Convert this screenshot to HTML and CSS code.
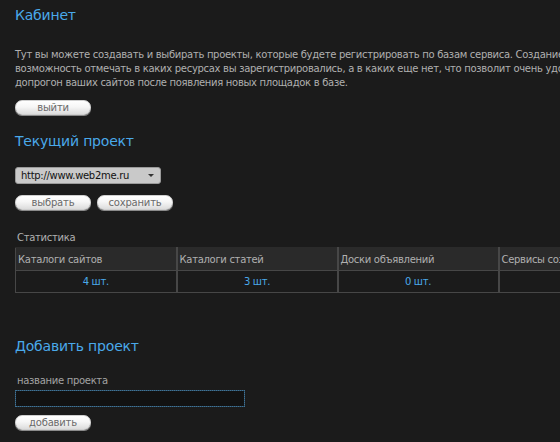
FILE: index.html
```html
<!DOCTYPE html>
<html lang="ru">
<head>
<meta charset="utf-8">
<link rel="stylesheet" href="styles.css">
</head>
<body>
<div class="page">
  <h2 class="title t-cab">Кабинет</h2>
  <p class="intro">Тут вы можете создавать и выбирать проекты, которые будете регистрировать по базам сервиса. Создание<br>возможность отмечать в каких ресурсах вы зарегистрировались, а в каких еще нет, что позволит очень удобно<br>допрогон ваших сайтов после появления новых площадок в базе.</p>
  <div class="row"><button class="btn">выйти</button></div>

  <h2 class="title t-cur">Текущий проект</h2>
  <div class="select"><span>http://www.web2me.ru</span><span class="arrow"></span></div>
  <div class="row gap"><button class="btn">выбрать</button><button class="btn">сохранить</button></div>

  <div class="stat-label">Статистика</div>
  <table class="stats">
    <tr class="head"><td>Каталоги сайтов</td><td>Каталоги статей</td><td>Доски объявлений</td><td>Сервисы создания</td></tr>
    <tr class="vals"><td>4 шт.</td><td>3 шт.</td><td>0 шт.</td><td></td></tr>
  </table>

  <h2 class="title t-add">Добавить проект</h2>
  <div class="field-label">название проекта</div>
  <div class="input"></div>
  <div class="row"><button class="btn">добавить</button></div>
</div>
</body>
</html>
```
FILE: styles.css
```css
html, body {
  margin: 0;
  padding: 0;
  background: #1b1b1b;
  overflow: hidden;
  width: 560px;
  height: 442px;
}
.page {
  padding: 0 0 0 15px;
  font-family: "DejaVu Sans", Verdana, sans-serif;
  font-size: 10px;
  letter-spacing: -0.3px;
  color: #b0b0b0;
  white-space: nowrap;
}
.title {
  margin: 0;
  font-size: 14px;
  letter-spacing: -0.2px;
  font-weight: normal;
  color: #4aa9ea;
  line-height: 20px;
}
.t-cab { padding-top: 5px; }
.t-cur { margin-top: 16px; }
.t-add { margin-top: 43px; }
.intro {
  margin: 23px 0 0 0;
  line-height: 14px;
}
.row {
  display: flex;
  margin-top: 10px;
}
.gap { gap: 6px; margin-top: 11px; }
.btn {
  width: 76px;
  height: 15px;
  padding: 0;
  border: 1px solid #cfcfcf;
  border-radius: 7px;
  background: linear-gradient(#ffffff 0%, #f6f6f6 45%, #dcdcdc 100%);
  box-shadow: 0 1px 0 #8a8a8a;
  font-family: "DejaVu Sans", Verdana, sans-serif;
  font-size: 10px;
  letter-spacing: -0.2px;
  line-height: 13px;
  color: #6a6a6a;
  text-align: center;
}
.select {
  margin-top: 16px;
  width: 146px;
  height: 17px;
  box-sizing: border-box;
  background: #c9c9c9;
  border: 1px solid #9a9a9a;
  border-radius: 3px;
  display: flex;
  align-items: center;
  justify-content: space-between;
  padding: 0 6px 0 5px;
  color: #111;
  font-size: 10px;
}
.arrow {
  width: 0;
  height: 0;
  border-left: 3px solid transparent;
  border-right: 3px solid transparent;
  border-top: 3px solid #333;
}
.stat-label {
  margin-top: 21px;
  padding-left: 2px;
  line-height: 14px;
}
.stats {
  margin-top: 2px;
  border-collapse: collapse;
  width: 645px;
  table-layout: fixed;
}
.stats td {
  border: 1px solid #474747;
  border-top: 0;
  padding: 0 2px;
}
.stats .head td {
  background: #2a2a2a;
  height: 22px;
  border-top: 1px solid #2a2a2a;
  border-left: 2px solid #474747;
}
.stats .vals td {
  height: 21px;
  text-align: center;
  color: #4aa9ea;
  border-left: 2px solid #474747;
}
.stats tr td:first-child { border-left: 1px solid #474747; }
.field-label {
  margin-top: 18px;
  padding-left: 2px;
  line-height: 14px;
  color: #a3a3a3;
}
.input {
  margin-top: 2px;
  width: 230px;
  height: 17px;
  box-sizing: border-box;
  border: 1px solid #2d4d63;
  outline: 1px dotted #3f7397;
  outline-offset: -1px;
  background: #121212;
}
.input + .row { margin-top: 8px; }
```
